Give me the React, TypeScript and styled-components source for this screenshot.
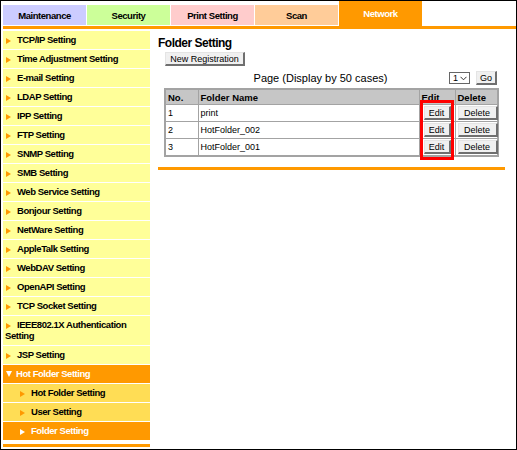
import React from 'react';
import styled, { createGlobalStyle } from 'styled-components';

const GlobalStyle = createGlobalStyle`
  html, body {
    margin: 0;
    padding: 0;
    background: #fff;
  }
  body {
    font-family: "Liberation Sans", Arial, sans-serif;
    color: #000;
  }
`;

const Frame = styled.div`
  width: 517px;
  height: 450px;
  box-sizing: border-box;
  border: 1px solid #000;
  padding-left: 2px;
  background: #fff;
  overflow: hidden;
`;

const TabBar = styled.div`
  display: flex;
  align-items: flex-end;
  gap: 1px;
  height: 25px;
`;

const Tab = styled.div<{ $bg: string; $active?: boolean }>`
  width: 83px;
  height: ${p => (p.$active ? '25px' : '20px')};
  margin-bottom: ${p => (p.$active ? '0' : '1px')};
  background: ${p => p.$bg};
  color: ${p => (p.$active ? '#fff' : '#000')};
  display: flex;
  align-items: center;
  justify-content: center;
  font-size: 9.5px;
  font-weight: bold;
  letter-spacing: -0.45px;
`;

const Rule = styled.div`
  height: 3px;
  background: #ff9900;
`;

const Body = styled.div`
  display: flex;
  gap: 8px;
  margin-top: 2px;
`;

const Sidebar = styled.nav`
  width: 147px;
  display: flex;
  flex-direction: column;
  gap: 1px;
`;

type Kind = 'normal' | 'open' | 'sub' | 'current';

const bgFor: Record<Kind, string> = {
  normal: '#ffff99',
  open: '#ff9900',
  sub: '#ffdd55',
  current: '#ff9900',
};

const NavItem = styled.div<{ $kind: Kind }>`
  padding: 3px 4px 4px ${p => (p.$kind === 'sub' || p.$kind === 'current' ? '16px' : '2px')};
  line-height: 11px;
  font-size: 9.5px;
  font-weight: bold;
  letter-spacing: -0.45px;
  background: ${p => bgFor[p.$kind]};
  color: ${p => (p.$kind === 'open' || p.$kind === 'current' ? '#fff' : '#000')};
`;

const Arrow = styled.span<{ $color: string; $down?: boolean }>`
  display: inline-block;
  width: 0;
  height: 0;
  margin-left: 1px;
  ${p =>
    p.$down
      ? `border-left: 3.5px solid transparent;
         border-right: 3.5px solid transparent;
         border-top: 6px solid ${p.$color};
         margin-right: 4px;
         vertical-align: 0;`
      : `border-top: 3.5px solid transparent;
         border-bottom: 3.5px solid transparent;
         border-left: 5px solid ${p.$color};
         margin-right: 6px;
         vertical-align: -0.5px;`}
`;

const SideFooter = styled.div`
  margin-top: 3px;
  height: 3px;
  background: #ff9900;
`;

const Main = styled.main`
  width: 347px;
`;

const Title = styled.h2`
  margin: 5px 0 0;
  font-size: 12px;
  line-height: 14px;
  font-weight: bold;
  letter-spacing: -0.5px;
`;

const Inner = styled.div`
  margin-left: 6px;
  width: 333px;
`;

const Button = styled.button<{ $w?: number }>`
  box-sizing: border-box;
  width: ${p => (p.$w ? `${p.$w}px` : 'auto')};
  height: 14px;
  padding: 0 2px;
  background: #f0f0f0;
  border-style: solid;
  border-width: 1px 2px 2px 1px;
  border-color: #e4e4e4 #6f6f6f #6f6f6f #e4e4e4;
  font-family: "Liberation Sans", Arial, sans-serif;
  font-size: 9px;
  line-height: 10px;
  color: #000;
  cursor: pointer;
`;

const ButtonRow = styled.div`
  margin: 2px 0 0 1px;
  display: flex;
`;

const PagerRow = styled.div`
  margin-top: 5px;
  height: 14px;
  display: flex;
  align-items: center;
`;

const PagerText = styled.div`
  flex: 1;
  text-align: center;
  padding-left: 28px;
  font-size: 11px;
`;

const FakeSelect = styled.div`
  box-sizing: border-box;
  width: 21px;
  height: 12px;
  border: 1px solid #666;
  background: #fff;
  display: flex;
  align-items: center;
  justify-content: space-between;
  padding: 0 2px 0 3px;
  font-size: 9px;
  margin-right: 6px;
`;

const TableWrap = styled.div`
  position: relative;
  margin-top: 3px;
`;

const Table = styled.table`
  width: 333px;
  table-layout: fixed;
  border-collapse: collapse;
  border: 2px solid #a3a3a3;
  font-size: 9px;
`;

const Th = styled.th`
  height: 14px;
  padding: 0 2px;
  background: #c6c6c6;
  border: 1px solid #a3a3a3;
  text-align: left;
  font-weight: bold;
  font-size: 9.5px;
`;

const Td = styled.td<{ $center?: boolean }>`
  height: 16px;
  padding: 0 2px;
  border: 1px solid #a3a3a3;
  text-align: ${p => (p.$center ? 'center' : 'left')};
`;

const Highlight = styled.div`
  position: absolute;
  left: 256px;
  top: 12px;
  width: 34px;
  height: 60px;
  box-sizing: border-box;
  border: 3px solid #f00;
  pointer-events: none;
`;

const BottomRule = styled(Rule)`
  margin-top: 10px;
`;

const tabs = [
  { label: 'Maintenance', bg: '#ccccff' },
  { label: 'Security', bg: '#ccff99' },
  { label: 'Print Setting', bg: '#ffcccc' },
  { label: 'Scan', bg: '#ffcc99' },
  { label: 'Network', bg: '#ff9900', active: true },
];

const nav: { label: string; kind: Kind }[] = [
  { label: 'TCP/IP Setting', kind: 'normal' },
  { label: 'Time Adjustment Setting', kind: 'normal' },
  { label: 'E-mail Setting', kind: 'normal' },
  { label: 'LDAP Setting', kind: 'normal' },
  { label: 'IPP Setting', kind: 'normal' },
  { label: 'FTP Setting', kind: 'normal' },
  { label: 'SNMP Setting', kind: 'normal' },
  { label: 'SMB Setting', kind: 'normal' },
  { label: 'Web Service Setting', kind: 'normal' },
  { label: 'Bonjour Setting', kind: 'normal' },
  { label: 'NetWare Setting', kind: 'normal' },
  { label: 'AppleTalk Setting', kind: 'normal' },
  { label: 'WebDAV Setting', kind: 'normal' },
  { label: 'OpenAPI Setting', kind: 'normal' },
  { label: 'TCP Socket Setting', kind: 'normal' },
  { label: 'IEEE802.1X Authentication Setting', kind: 'normal' },
  { label: 'JSP Setting', kind: 'normal' },
  { label: 'Hot Folder Setting', kind: 'open' },
  { label: 'Hot Folder Setting', kind: 'sub' },
  { label: 'User Setting', kind: 'sub' },
  { label: 'Folder Setting', kind: 'current' },
];

const folders = [
  { no: 1, name: 'print' },
  { no: 2, name: 'HotFolder_002' },
  { no: 3, name: 'HotFolder_001' },
];

const App: React.FC = () => {
  return (
    <>
      <GlobalStyle />
      <Frame>
        <TabBar>
          {tabs.map(t => (
            <Tab key={t.label} $bg={t.bg} $active={t.active}>
              {t.label}
            </Tab>
          ))}
        </TabBar>
        <Rule />
        <Body>
          <Sidebar>
            {nav.map((item, i) => (
              <NavItem key={i} $kind={item.kind}>
                <Arrow
                  $down={item.kind === 'open'}
                  $color={item.kind === 'open' || item.kind === 'current' ? '#fff' : '#ff9900'}
                />
                {item.label}
              </NavItem>
            ))}
            <SideFooter />
          </Sidebar>
          <Main>
            <Title>Folder Setting</Title>
            <Inner>
              <ButtonRow>
                <Button $w={80}>New Registration</Button>
              </ButtonRow>
              <PagerRow>
                <PagerText>Page (Display by 50 cases)</PagerText>
                <FakeSelect>
                  <span>1</span>
                  <svg width="7" height="5" viewBox="0 0 7 5">
                    <path d="M0.5 0.8 L3.5 3.8 L6.5 0.8" fill="none" stroke="#333" strokeWidth="1" />
                  </svg>
                </FakeSelect>
                <Button $w={21}>Go</Button>
              </PagerRow>
              <TableWrap>
                <Table>
                  <colgroup>
                    <col style={{ width: 33 }} />
                    <col style={{ width: 221 }} />
                    <col style={{ width: 36 }} />
                    <col style={{ width: 43 }} />
                  </colgroup>
                  <thead>
                    <tr>
                      <Th>No.</Th>
                      <Th>Folder Name</Th>
                      <Th>Edit</Th>
                      <Th>Delete</Th>
                    </tr>
                  </thead>
                  <tbody>
                    {folders.map(f => (
                      <tr key={f.no}>
                        <Td>{f.no}</Td>
                        <Td>{f.name}</Td>
                        <Td $center>
                          <Button $w={27}>Edit</Button>
                        </Td>
                        <Td $center>
                          <Button $w={40}>Delete</Button>
                        </Td>
                      </tr>
                    ))}
                  </tbody>
                </Table>
                <Highlight />
              </TableWrap>
            </Inner>
            <BottomRule />
          </Main>
        </Body>
      </Frame>
    </>
  );
};

export default App;
